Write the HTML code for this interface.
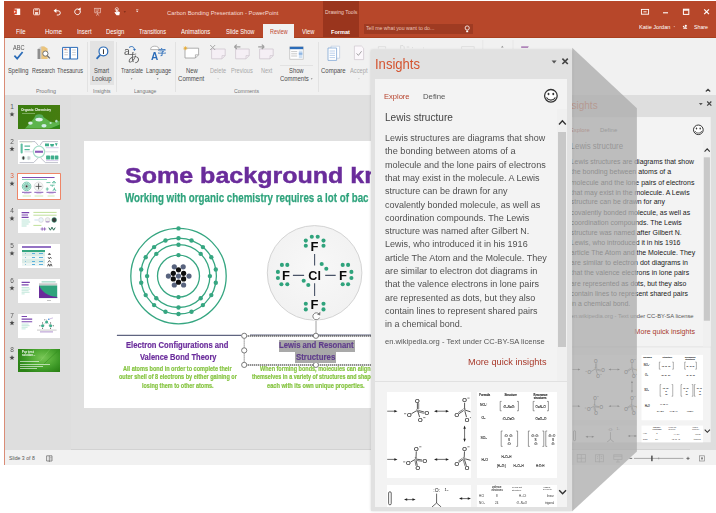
<!DOCTYPE html>
<html><head><meta charset="utf-8"><title>Carbon Bonding Presentation - PowerPoint</title>
<style>
html,body{margin:0;padding:0;}
body{width:716px;height:513px;background:#fff;position:relative;overflow:hidden;font-family:"Liberation Sans",sans-serif;}
.t{position:absolute;white-space:nowrap;line-height:1;}
.r{position:absolute;}
#root{position:absolute;left:0;top:0;width:740px;height:530px;filter:blur(.4px);}
svg{overflow:visible;}
svg text{font-family:"Liberation Sans",sans-serif;}

.pn{position:absolute;width:201px;height:461px;background:#E1E1E1;overflow:hidden;}
.pn .t{color:#505050;}
.pn .c1{position:absolute;left:3.8px;top:28.6px;width:192.4px;height:302.6px;background:#F3F3F3;}
.pn .c2{position:absolute;left:3.8px;top:332px;width:192.4px;height:124.8px;background:#F3F3F3;}
.pn .sb{position:absolute;left:186px;top:59px;width:10.2px;height:272.2px;background:#F0F0F0;}
.pn .th{position:absolute;left:187px;top:81.6px;width:8.4px;height:215.6px;background:#C8C8C8;}
.pn .tile{position:absolute;background:#fff;overflow:hidden;}
.pn .bd{left:13.5px;font-size:9.05px;}
.sm .t{color:#1A1A1A;}
.pn.sm{background:#DEDEDE;}

</style></head><body>
<div id="root">
<div class="r" style="left:4.00px;top:1.00px;width:726.00px;height:36.20px;background:#B7472A;"></div>
<div class="r" style="left:4.00px;top:36.80px;width:726.00px;height:1.10px;background:#A9401F;"></div>
<div class="r" style="left:4.00px;top:37.90px;width:726.00px;height:56.70px;background:#F1F1F1;"></div>
<div class="r" style="left:4.00px;top:94.60px;width:726.00px;height:355.40px;background:#E0E0E0;"></div>
<div class="r" style="left:4.00px;top:94.60px;width:66.80px;height:355.40px;background:#DEDEDE;"></div>
<div class="r" style="left:70.80px;top:449.30px;width:659.20px;height:0.70px;background:#D2D2D2;"></div>
<div class="r" style="left:4.00px;top:450.00px;width:726.00px;height:14.60px;background:#F1F1F1;"></div>
<div class="r" style="left:3.80px;top:38.00px;width:0.90px;height:426.60px;background:#DA8C76;"></div>
<div class="r" style="left:323.00px;top:1.00px;width:36.30px;height:36.00px;background:#9A351D;"></div>
<div class="r" style="left:262.80px;top:24.00px;width:31.40px;height:14.00px;background:#F1F1F1;"></div>
<div class="r" style="left:363.60px;top:23.90px;width:109.90px;height:10.30px;background:#9F3B22;"></div>
<div class="t" style="left:167.00px;top:9.76px;font-size:6.10px;color:#F6DDD6;transform:scaleX(0.955);transform-origin:0 0;">Carbon Bonding Presentation - PowerPoint</div>
<div class="t" style="left:324.80px;top:9.79px;font-size:5.70px;color:#F0CFC5;transform:scaleX(0.910);transform-origin:0 0;">Drawing Tools</div>
<div class="t" style="left:15.50px;top:28.95px;font-size:6.30px;color:#fff;transform:scaleX(0.936);transform-origin:0 0;">File</div>
<div class="t" style="left:45.00px;top:28.95px;font-size:6.30px;color:#fff;transform:scaleX(1.012);transform-origin:0 0;">Home</div>
<div class="t" style="left:76.50px;top:28.95px;font-size:6.30px;color:#fff;transform:scaleX(0.920);transform-origin:0 0;">Insert</div>
<div class="t" style="left:105.90px;top:28.95px;font-size:6.30px;color:#fff;transform:scaleX(0.938);transform-origin:0 0;">Design</div>
<div class="t" style="left:138.90px;top:28.95px;font-size:6.30px;color:#fff;transform:scaleX(0.883);transform-origin:0 0;">Transitions</div>
<div class="t" style="left:181.30px;top:28.95px;font-size:6.30px;color:#fff;transform:scaleX(0.940);transform-origin:0 0;">Animations</div>
<div class="t" style="left:226.00px;top:28.95px;font-size:6.30px;color:#fff;transform:scaleX(0.904);transform-origin:0 0;">Slide Show</div>
<div class="t" style="left:302.20px;top:28.95px;font-size:6.30px;color:#fff;transform:scaleX(0.908);transform-origin:0 0;">View</div>
<div class="t" style="left:269.50px;top:28.95px;font-size:6.30px;color:#C0452A;transform:scaleX(0.857);transform-origin:0 0;">Review</div>
<div class="t" style="left:331.40px;top:29.00px;font-size:6.20px;color:#fff;transform:scaleX(0.899);transform-origin:0 0;font-weight:700;">Format</div>
<div class="t" style="left:366.00px;top:26.09px;font-size:5.70px;color:#E9C4B8;transform:scaleX(0.912);transform-origin:0 0;">Tell me what you want to do...</div>
<div class="t" style="left:639.20px;top:24.54px;font-size:5.80px;color:#fff;transform:scaleX(0.964);transform-origin:0 0;">Katie Jordan</div>
<div class="t" style="left:694.00px;top:24.54px;font-size:5.80px;color:#fff;transform:scaleX(0.905);transform-origin:0 0;">Share</div>
<svg class="r" style="left:0.00px;top:0.00px;" width="716" height="40" viewBox="0 0 716 40"><rect x="14.6" y="8.6" width="5.6" height="6.4" fill="#fff"/><rect x="13.2" y="9.4" width="3.6" height="4.8" fill="#D9482B"/><path d="M14.2 10.6l1.6 1.2-1.6 1.2z" fill="#fff"/><rect x="33.6" y="8.8" width="6" height="6" rx="0.6" fill="none" stroke="#F3D5CC" stroke-width="1"/><rect x="35" y="12" width="3.2" height="2.8" fill="#F3D5CC"/><rect x="34.8" y="9" width="3.4" height="1.6" fill="#F3D5CC" opacity=".7"/><path d="M55.4 10.8h2.8a2.1 2.1 0 0 1 0 4.2h-1.4" fill="none" stroke="#fff" stroke-width=".95"/><path d="M53.6 10.8l2.8-2.3v4.6z" fill="#fff"/><path d="M78.6 9.2a2.8 2.8 0 1 0 1.6 1.8" fill="none" stroke="#fff" stroke-width="1"/><path d="M80.8 7.6l-.2 3.4-3-1.4z" fill="#fff"/><path d="M94 8.4h7.2M94.8 8.4v4.4h5.6V8.4M96.2 10h2.8M96.2 11.4h2M97.6 12.8v1.6M96 15.6l1.6-1.4 1.6 1.4" fill="none" stroke="#F1CFC5" stroke-width=".7"/><circle cx="116.8" cy="9.2" r="1.6" fill="none" stroke="#fff" stroke-width=".6"/><path d="M116.3 9v3.4l-1.2-.6-.6 .8 2 2.6h2.8l.6-3-1.2-.6h-1.4V9z" fill="#fff"/><path d="M123.6 11.2h2.4l-1.2 1.5z" fill="#7A2A16"/><path d="M136 10.8h2.4l-1.2 1.5z" fill="#fff"/><path d="M136 9.6h2.4" stroke="#fff" stroke-width=".5"/><circle cx="467.2" cy="28" r="2.1" fill="none" stroke="#fff" stroke-width=".8"/><path d="M466.2 30.6h2v1.6h-2z" fill="#fff"/><rect x="641.4" y="9.4" width="7.2" height="4.8" fill="none" stroke="#fff" stroke-width=".9"/><path d="M643.4 11.8h3.2" stroke="#fff" stroke-width=".9"/><path d="M663 12.8h5" stroke="#fff" stroke-width="1.1"/><rect x="683.4" y="9.2" width="5.4" height="5.2" fill="none" stroke="#fff" stroke-width="1"/><path d="M683.4 10h5.4" stroke="#fff" stroke-width="1.4"/><path d="M704.2 9.4l4.8 4.8M709 9.4l-4.8 4.8" stroke="#fff" stroke-width="1.2"/><path d="M673.4 26.2h1.8l-.9 1.1z" fill="#E8C0B4"/><circle cx="685.8" cy="25.8" r="1.1" fill="#fff"/><path d="M683.2 28.8c0-2 4-2 4 0z" fill="#fff"/><circle cx="683.6" cy="26.6" r=".8" fill="#fff"/></svg>
<div class="r" style="left:89.70px;top:41.00px;width:24.30px;height:43.60px;background:#E3E3E3;"></div>
<div class="r" style="left:86.60px;top:41.50px;width:0.60px;height:50.50px;background:#E2E2E2;"></div>
<div class="r" style="left:116.40px;top:41.50px;width:0.60px;height:50.50px;background:#E2E2E2;"></div>
<div class="r" style="left:175.00px;top:41.50px;width:0.60px;height:50.50px;background:#E2E2E2;"></div>
<div class="r" style="left:317.50px;top:41.50px;width:0.60px;height:50.50px;background:#E2E2E2;"></div>
<div class="r" style="left:280.30px;top:65.00px;width:32.40px;height:0.60px;background:#E2E2E2;"></div>
<div class="t" style="left:8.40px;top:68.45px;font-size:6.30px;color:#4C4C4C;transform:scaleX(0.910);transform-origin:0 0;">Spelling</div>
<div class="t" style="left:31.80px;top:68.45px;font-size:6.30px;color:#4C4C4C;transform:scaleX(0.853);transform-origin:0 0;">Research</div>
<div class="t" style="left:57.00px;top:68.45px;font-size:6.30px;color:#4C4C4C;transform:scaleX(0.873);transform-origin:0 0;">Thesaurus</div>
<div class="t" style="left:94.20px;top:68.45px;font-size:6.30px;color:#4C4C4C;transform:scaleX(0.905);transform-origin:0 0;">Smart</div>
<div class="t" style="left:92.00px;top:76.25px;font-size:6.30px;color:#4C4C4C;transform:scaleX(0.948);transform-origin:0 0;">Lookup</div>
<div class="t" style="left:120.60px;top:68.45px;font-size:6.30px;color:#4C4C4C;transform:scaleX(0.849);transform-origin:0 0;">Translate</div>
<div class="t" style="left:145.50px;top:68.45px;font-size:6.30px;color:#4C4C4C;transform:scaleX(0.899);transform-origin:0 0;">Language</div>
<div class="t" style="left:185.80px;top:68.45px;font-size:6.30px;color:#4C4C4C;transform:scaleX(0.928);transform-origin:0 0;">New</div>
<div class="t" style="left:178.40px;top:76.25px;font-size:6.30px;color:#4C4C4C;transform:scaleX(0.963);transform-origin:0 0;">Comment</div>
<div class="t" style="left:210.00px;top:68.45px;font-size:6.30px;color:#A8A8A8;transform:scaleX(0.879);transform-origin:0 0;">Delete</div>
<div class="t" style="left:230.90px;top:68.45px;font-size:6.30px;color:#A8A8A8;transform:scaleX(0.889);transform-origin:0 0;">Previous</div>
<div class="t" style="left:260.70px;top:68.45px;font-size:6.30px;color:#A8A8A8;transform:scaleX(0.872);transform-origin:0 0;">Next</div>
<div class="t" style="left:289.20px;top:68.45px;font-size:6.30px;color:#4C4C4C;transform:scaleX(0.926);transform-origin:0 0;">Show</div>
<div class="t" style="left:280.00px;top:76.25px;font-size:6.30px;color:#4C4C4C;transform:scaleX(0.946);transform-origin:0 0;">Comments</div>
<div class="t" style="left:321.30px;top:68.45px;font-size:6.30px;color:#4C4C4C;transform:scaleX(0.953);transform-origin:0 0;">Compare</div>
<div class="t" style="left:350.20px;top:68.45px;font-size:6.30px;color:#A8A8A8;transform:scaleX(0.914);transform-origin:0 0;">Accept</div>
<div class="t" style="left:35.70px;top:87.52px;font-size:6.00px;color:#767676;transform:scaleX(0.890);transform-origin:0 0;">Proofing</div>
<div class="t" style="left:93.00px;top:87.52px;font-size:6.00px;color:#767676;transform:scaleX(0.851);transform-origin:0 0;">Insights</div>
<div class="t" style="left:134.00px;top:87.52px;font-size:6.00px;color:#767676;transform:scaleX(0.839);transform-origin:0 0;">Language</div>
<div class="t" style="left:233.90px;top:87.52px;font-size:6.00px;color:#767676;transform:scaleX(0.862);transform-origin:0 0;">Comments</div>
<svg class="r" style="left:0.00px;top:0.00px;" width="716" height="96" viewBox="0 0 716 96"><text x="18.8" y="50" font-size="6.4" text-anchor="middle" fill="#555" textLength="11.6" lengthAdjust="spacingAndGlyphs">ABC</text><path d="M14.4 55.6l2.8 3 5.4-6.6" fill="none" stroke="#2B6CB8" stroke-width="1.7"/><path d="M37.6 49l3.2-2.6 3.6 0v12.6h-6.8z" fill="#CFCFCF"/><rect x="37.6" y="49" width="2.6" height="10" fill="#8E8E8E"/><path d="M41.4 46.6l3-0.2 3.2 2v10.6h-6.2z" fill="#EBC47C"/><circle cx="45.4" cy="53.6" r="2.6" fill="#fff" stroke="#666" stroke-width=".9"/><path d="M47.2 55.6l2.6 2.8" stroke="#666" stroke-width="1.2"/><path d="M62.6 47.4h7.4v11.6h-7.4zM70.2 47.4h7.4v11.6h-7.4z" fill="#fff" stroke="#2B6CB8" stroke-width="1"/><path d="M64.4 50h3.6M64.4 52.4h3.6M64.4 54.8h3.6M72.2 50h3.6M72.2 52.4h3.6M72.2 54.8h3.6" stroke="#C9C9C9" stroke-width=".9"/><path d="M64.4 49.2h2" stroke="#D9482B" stroke-width=".9"/><circle cx="103.4" cy="51.4" r="4.4" fill="#fff" stroke="#2B6CB8" stroke-width="1.2"/><path d="M100.2 54.8l-3.6 4" stroke="#2B6CB8" stroke-width="1.8"/><text x="103.5" y="53.8" font-size="6.8" font-weight="700" text-anchor="middle" fill="#2A2A2A" font-family="Liberation Serif,serif">i</text><text x="126.8" y="55" font-size="10.5" text-anchor="middle" fill="#555">a</text><text x="134.4" y="60.6" font-size="11.5" text-anchor="middle" fill="#555" font-family="Liberation Sans,Noto Sans CJK JP,sans-serif">あ</text><path d="M129 47.6c2.4-2 5-1 5.4 1.6" fill="none" stroke="#2B6CB8" stroke-width="1"/><path d="M133 49h3l-1.5 2z" fill="#2B6CB8"/><text x="154.6" y="60.2" font-size="10" font-weight="700" text-anchor="middle" fill="#2B6CB8">A</text><text x="162" y="55.2" font-size="7.6" font-weight="700" text-anchor="middle" fill="#2B6CB8" font-family="Liberation Sans,Noto Sans CJK JP,sans-serif">字</text><path d="M150.6 49.6a4.2 3.4 0 0 1 8.4 0z" fill="#fff" stroke="#999" stroke-width=".7"/><path d="M130.7 78.4h1.8l-.9 1.1zM156.8 78.4h1.8l-.9 1.1z" fill="#555"/><path d="M185.0 48.2h13.6v6.6l-3.2 3.2h-10.4z" fill="#fff" stroke="#9A9A9A" stroke-width=".8"/><path d="M195.4 58.0v-3.2h3.2" fill="none" stroke="#9A9A9A" stroke-width=".7"/><path d="M185.4 46.2v4M183.4 48.2h4M184 46.8l2.8 2.8M186.8 46.8l-2.8 2.8" stroke="#E9A825" stroke-width=".7"/><path d="M211.6 49.0h13.6v6.6l-3.2 3.2h-10.4z" fill="#F5EFF5" stroke="#CFC6CF" stroke-width=".8"/><path d="M222.0 58.8v-3.2h3.2" fill="none" stroke="#CFC6CF" stroke-width=".7"/><path d="M210.2 45l5 5M215.2 45l-5 5" stroke="#A6A6A6" stroke-width="1"/><path d="M235.6 49.0h13.6v6.6l-3.2 3.2h-10.4z" fill="#F5EFF5" stroke="#CFC6CF" stroke-width=".8"/><path d="M246.0 58.8v-3.2h3.2" fill="none" stroke="#CFC6CF" stroke-width=".7"/><path d="M234.4 46.8h6M234.4 46.8l2.4-2.2M234.4 46.8l2.4 2.2" stroke="#9F9F9F" stroke-width="1.2" fill="none"/><path d="M259.6 49.0h13.6v6.6l-3.2 3.2h-10.4z" fill="#F5EFF5" stroke="#CFC6CF" stroke-width=".8"/><path d="M270.0 58.8v-3.2h3.2" fill="none" stroke="#CFC6CF" stroke-width=".7"/><path d="M258.2 46.8h6M264.2 46.8l-2.4-2.2M264.2 46.8l-2.4 2.2" stroke="#9F9F9F" stroke-width="1.2" fill="none"/><path d="M217.4 78.4h1.4l-.7 .9z" fill="#AAA"/><rect x="289.8" y="46.8" width="13.4" height="12.4" fill="#fff" stroke="#B9B9B9" stroke-width=".7"/><rect x="289.8" y="46.8" width="13.4" height="2.4" fill="#2B6CB8"/><path d="M291.2 51.6h6M291.2 53.8h6M291.2 56h6" stroke="#BBB" stroke-width=".8"/><rect x="298.8" y="50.6" width="3.6" height="7.6" fill="#CFE0F3"/><rect x="298.8" y="52.6" width="3.6" height="2.2" fill="#8FB6E3"/><path d="M310.8 78.4h1.8l-.9 1.1z" fill="#555"/><path d="M331 46.2h8.6v12h-8.6z" fill="#fff" stroke="#B8C9DE" stroke-width=".7"/><path d="M328 48h8.6v12.4h-8.6z" fill="#fff" stroke="#7FA6D4" stroke-width=".8"/><path d="M329.6 51h5.4M329.6 53.2h5.4M329.6 55.4h5.4M329.6 57.6h5.4" stroke="#A9C4E6" stroke-width=".8"/><path d="M354.4 46h7l2.2 2.2v11.4h-9.2z" fill="#FBF7FB" stroke="#CFC5CF" stroke-width=".7"/><path d="M356.6 53.4l1.8 2 3.2-4.2" fill="none" stroke="#9A9A9A" stroke-width=".9"/><path d="M358.2 78.4h1.4l-.7 .9z" fill="#AAA"/><path d="M705.8 91.5l2.2-2.2 2.2 2.2" fill="none" stroke="#444" stroke-width="1.15"/></svg>
<div class="t" style="left:8.70px;top:455.33px;font-size:5.98px;color:#555;transform:scaleX(0.862);transform-origin:0 0;">Slide 3 of 8</div>
<svg class="r" style="left:0.00px;top:440.00px;" width="716" height="30" viewBox="0 440 716 30"><path d="M46.6 455.8h5.4v5.2h-5.4zM49.3 455.8v6.2" fill="none" stroke="#666" stroke-width=".7"/><path d="M50.2 457.4h1.4M50.2 459h1.4" stroke="#666" stroke-width=".5"/><g fill="none" stroke="#9A9A9A" stroke-width=".75"><rect x="577.2" y="454.6" width="8.2" height="7.4"/><path d="M577.2 458.3h8.2M581.3 454.6v7.4"/><rect x="595.4" y="454.8" width="8" height="7"/><path d="M599.4 454.2v8.2M597 456.6h1M597 458.4h1M600.8 456.6h1.4M600.8 458.4h1.4"/><rect x="613.8" y="454.8" width="8.2" height="4.8"/><path d="M613.8 456.2h8.2M617.9 459.6v2.2M616 462h3.8"/></g><path d="M629.4 458.4h2.8" stroke="#555" stroke-width=".8"/><path d="M634 458.4h49.4" stroke="#777" stroke-width=".6"/><rect x="651.2" y="455.6" width="1.4" height="5.6" fill="#444"/><path d="M658.7 457.4v2" stroke="#777" stroke-width=".5"/><path d="M686.4 458.4h3.2M688 456.8v3.2" stroke="#555" stroke-width=".8"/><rect x="699.4" y="455.8" width="5.2" height="5.2" fill="none" stroke="#8A8A8A" stroke-width=".7"/><rect x="701" y="457.4" width="2" height="2" fill="#8A8A8A"/></svg>
<div class="t" style="left:10.30px;top:104.05px;font-size:6.47px;color:#5A5A5A;">1</div>
<svg class="r" style="left:0.00px;top:0.00px;" width="716" height="513" viewBox="0 0 716 513"><polygon points="12.00,111.70 12.68,113.47 14.57,113.57 13.09,114.76 13.59,116.58 12.00,115.55 10.41,116.58 10.91,114.76 9.43,113.57 11.32,113.47" fill="#4A4A4A"/></svg>
<div class="t" style="left:10.30px;top:138.65px;font-size:6.47px;color:#5A5A5A;">2</div>
<svg class="r" style="left:0.00px;top:0.00px;" width="716" height="513" viewBox="0 0 716 513"><polygon points="12.00,146.30 12.68,148.07 14.57,148.17 13.09,149.36 13.59,151.18 12.00,150.15 10.41,151.18 10.91,149.36 9.43,148.17 11.32,148.07" fill="#4A4A4A"/></svg>
<div class="t" style="left:10.30px;top:173.35px;font-size:6.47px;color:#E0613F;">3</div>
<svg class="r" style="left:0.00px;top:0.00px;" width="716" height="513" viewBox="0 0 716 513"><polygon points="12.00,181.00 12.68,182.77 14.57,182.87 13.09,184.06 13.59,185.88 12.00,184.85 10.41,185.88 10.91,184.06 9.43,182.87 11.32,182.77" fill="#4A4A4A"/></svg>
<div class="t" style="left:10.30px;top:208.15px;font-size:6.47px;color:#5A5A5A;">4</div>
<svg class="r" style="left:0.00px;top:0.00px;" width="716" height="513" viewBox="0 0 716 513"><polygon points="12.00,215.80 12.68,217.57 14.57,217.67 13.09,218.86 13.59,220.68 12.00,219.65 10.41,220.68 10.91,218.86 9.43,217.67 11.32,217.57" fill="#4A4A4A"/></svg>
<div class="t" style="left:10.30px;top:243.05px;font-size:6.47px;color:#5A5A5A;">5</div>
<svg class="r" style="left:0.00px;top:0.00px;" width="716" height="513" viewBox="0 0 716 513"><polygon points="12.00,250.70 12.68,252.47 14.57,252.57 13.09,253.76 13.59,255.58 12.00,254.55 10.41,255.58 10.91,253.76 9.43,252.57 11.32,252.47" fill="#4A4A4A"/></svg>
<div class="t" style="left:10.30px;top:277.85px;font-size:6.47px;color:#5A5A5A;">6</div>
<svg class="r" style="left:0.00px;top:0.00px;" width="716" height="513" viewBox="0 0 716 513"><polygon points="12.00,285.50 12.68,287.27 14.57,287.37 13.09,288.56 13.59,290.38 12.00,289.35 10.41,290.38 10.91,288.56 9.43,287.37 11.32,287.27" fill="#4A4A4A"/></svg>
<div class="t" style="left:10.30px;top:312.65px;font-size:6.47px;color:#5A5A5A;">7</div>
<svg class="r" style="left:0.00px;top:0.00px;" width="716" height="513" viewBox="0 0 716 513"><polygon points="12.00,320.30 12.68,322.07 14.57,322.17 13.09,323.36 13.59,325.18 12.00,324.15 10.41,325.18 10.91,323.36 9.43,322.17 11.32,322.07" fill="#4A4A4A"/></svg>
<div class="t" style="left:10.30px;top:347.45px;font-size:6.47px;color:#5A5A5A;">8</div>
<svg class="r" style="left:0.00px;top:0.00px;" width="716" height="513" viewBox="0 0 716 513"><polygon points="12.00,355.10 12.68,356.87 14.57,356.97 13.09,358.16 13.59,359.98 12.00,358.95 10.41,359.98 10.91,358.16 9.43,356.97 11.32,356.87" fill="#4A4A4A"/></svg>
<div class="r" style="left:18.05px;top:104.90px;width:41.65px;height:24.00px;background:linear-gradient(95deg,#3C7D10 0%,#3F7E10 55%,#477C10 100%);overflow:hidden"></div>
<svg class="r" style="left:0.00px;top:0.00px;" width="716" height="513" viewBox="0 0 716 513"><defs><clipPath id="c1"><rect x="18.05" y="104.9" width="41.65" height="23.7"/></clipPath><filter id="b1"><feGaussianBlur stdDeviation=".45"/></filter></defs><g clip-path="url(#c1)"><g filter="url(#b1)"><path d="M24.5 129L30 123 35 117 39 114.4 44 117.4 50 121.4 55 122.6 60 120.4V125L50 129z" fill="#5DB44E"/><path d="M49 129L60 124.6V129z" fill="#2C8A1C"/><ellipse cx="39.1" cy="117.2" rx="4.3" ry="3" fill="#58AD5C"/><ellipse cx="39.1" cy="119.6" rx="3.7" ry="1.9" fill="#E4F3F3"/><ellipse cx="30.4" cy="123.1" rx="2.3" ry="1.6" fill="#D7EEE6"/><ellipse cx="44" cy="125.8" rx="2.6" ry="1.8" fill="#CFEBE6"/><ellipse cx="56.4" cy="121.2" rx="1.2" ry="1.4" fill="#A8DCC0"/><ellipse cx="50.6" cy="123" rx="1.1" ry=".9" fill="#BFE6D2"/></g></g></svg>
<div class="t" style="left:21.30px;top:108.70px;font-size:3.80px;color:#fff;transform:scaleX(0.885);transform-origin:0 0;font-weight:700;">Organic Chemistry</div>
<div class="r" style="left:21.50px;top:112.50px;width:13.50px;height:0.40px;background:rgba(220,240,210,.4);"></div>
<div class="r" style="left:18.05px;top:139.50px;width:41.65px;height:24.00px;background:#fff;"></div>
<svg class="r" style="left:0.00px;top:0.00px;" width="716" height="513" viewBox="0 0 716 513"><g fill="none" stroke="#8B90A2" stroke-width=".55"><path d="M19.6 141.6H35L38.4 145.6M58 141.6H42.6L39.8 145.6M19.6 162.6H33.6L38.4 157.8M58 162.6H45.4L40.5 157.8"/></g><path d="M24.5 151.8H33M45.4 151.8H58" stroke="#BFC3D0" stroke-width=".6"/><path d="M19.6 142.2H32.2" stroke="#CFE6A8" stroke-width=".4"/><circle cx="39" cy="151.8" r="5.6" fill="#fff" stroke="#A5DEC9" stroke-width="1.3"/><rect x="35" y="150.7" width="8" height="2.1" fill="#8A5CB8"/><rect x="20.6" y="143.4" width="2.1" height="10.2" rx="1" fill="#5FBFA2"/><path d="M24.5 146.2h5.6M24.5 149.7h5.2" stroke="#52B898" stroke-width="1.3"/><g fill="#3FAE8C"><path d="M45 143.6h4v2.6h-4zM50 144h4.2l-.8 2.4h-2.6zM54.9 143.2h2.8l-1.4 3z"/><rect x="46.1" y="155.6" width="3.9" height="3.8" rx=".5"/><rect x="50.6" y="155.6" width="3.7" height="3.8" rx=".5"/><rect x="54.9" y="155.6" width="3.5" height="3.8" rx=".5"/></g><path d="M45.8 147.7H58.6M46 160.6H58.4" stroke="#B59AD6" stroke-width=".5"/><circle cx="23.4" cy="158" r="2.3" fill="#DFF3EC"/><circle cx="28.7" cy="158" r="2.3" fill="#DFF3EC"/><ellipse cx="23.4" cy="158" rx="1.1" ry="1.7" fill="#3A3A3A"/><ellipse cx="28.7" cy="158" rx="1.2" ry="1.7" fill="#C9C9CF"/></svg>
<div class="r" style="left:16.80px;top:172.90px;width:44.10px;height:26.80px;background:#fff;border:1.4px solid #EE8567;box-sizing:border-box;border-radius:.8px"></div>
<div class="r" style="left:22.00px;top:176.50px;width:31.60px;height:1.60px;background:#7F4BB2;"></div>
<div class="r" style="left:53.60px;top:177.00px;width:1.80px;height:0.60px;background:#B79AD8;"></div>
<div class="r" style="left:22.00px;top:179.00px;width:24.80px;height:0.60px;background:#8FD2BA;"></div>
<svg class="r" style="left:0.00px;top:0.00px;" width="716" height="513" viewBox="0 0 716 513"><g fill="none" stroke="#45B391" stroke-width=".7"><circle cx="26.6" cy="186.4" r="4.3"/><circle cx="26.6" cy="186.4" r="3.1"/><circle cx="26.6" cy="186.4" r="2"/></g><circle cx="26.6" cy="186.4" r="1.1" fill="#333"/><circle cx="38.6" cy="186.4" r="4.4" fill="#F6F6F6" stroke="#C8C8C8" stroke-width=".5"/><path d="M35.6 186.4h6M38.6 183.4v6" stroke="#444" stroke-width=".8"/><path d="M46.4 182.6h4M52.4 182.8l1.6-1.8 1.6 1.8zM50 185.2h4.6M52.3 185.2v1.6M47.2 187.4v3.4M45.8 189h3M54.4 187.6v2.6M54.4 188.6l-1.6 2.4M54.4 188.6l1.6 2.4" stroke="#45B391" stroke-width=".75" fill="none"/><path d="M22 192.3h9.5M34.3 192.3h9M46.5 192.3h9.4" stroke="#8A5CB8" stroke-width="1"/><path d="M24 193.6h5.6M36.4 193.6h5M48.6 193.6h5" stroke="#B59AD6" stroke-width=".5"/><path d="M22.6 196h8.4M34.6 196h8.6M47.6 196h7" stroke="#C2E39C" stroke-width=".8"/></svg>
<div class="r" style="left:18.05px;top:209.00px;width:41.65px;height:24.00px;background:#fff;"></div>
<svg class="r" style="left:0.00px;top:0.00px;" width="716" height="513" viewBox="0 0 716 513"><path d="M21.6 212.6h7.6M21.6 215.0h6.4M21.6 217.4h7" stroke="#7A45AE" stroke-width="1.1"/><path d="M21.6 220.0h7.6M21.6 222.0h8.6M21.6 224.0h7M21.6 226.0h5" stroke="#9CD8C4" stroke-width=".7"/><path d="M33.4 212.4h23.2M33.4 215.2h23.2M33.4 225.4h8" stroke="#A5D36E" stroke-width=".7"/><circle cx="41" cy="220.0" r="2.4" fill="#EAF4FA" stroke="#BBB" stroke-width=".4"/><circle cx="47.6" cy="220.0" r="2.4" fill="#EEE" stroke="#BBB" stroke-width=".4"/><circle cx="54.2" cy="220.0" r="2.4" fill="#3A3A3A" stroke="#2FA37C" stroke-width=".5"/><path d="M34.4 220.0h3.6" stroke="#AACBE0" stroke-width=".6"/><path d="M45.8 221.8h3.6" stroke="#8E63B8" stroke-width=".7"/><path d="M40.6 229.0h5.6M42.2 227.3v3.4M44.6 227.3v3.4" stroke="#7A45AE" stroke-width=".7"/><path d="M48.8 227.6l1.6 2.6 1.6-3 1.6 3 1.6-2.6" fill="none" stroke="#2B6B54" stroke-width="1"/></svg>
<div class="r" style="left:18.05px;top:243.90px;width:41.65px;height:24.00px;background:#fff;"></div>
<div class="r" style="left:21.80px;top:246.20px;width:29.00px;height:1.90px;background:#9472C4;"></div>
<div class="r" style="left:21.60px;top:249.70px;width:23.40px;height:2.20px;background:#34A680;"></div>
<div class="r" style="left:21.60px;top:251.90px;width:23.40px;height:3.65px;background:#DBECE7;"></div>
<div class="r" style="left:31.80px;top:253.30px;width:3.00px;height:0.80px;background:#5AB0DC;"></div>
<div class="r" style="left:39.00px;top:253.30px;width:3.80px;height:0.80px;background:#5AB0DC;"></div>
<div class="r" style="left:25.20px;top:253.30px;width:0.80px;height:0.80px;background:#8CC4DC;"></div>
<div class="r" style="left:21.60px;top:255.55px;width:23.40px;height:3.65px;background:#EDF5F3;"></div>
<div class="r" style="left:31.80px;top:256.95px;width:3.00px;height:0.80px;background:#5AB0DC;"></div>
<div class="r" style="left:39.00px;top:256.95px;width:3.80px;height:0.80px;background:#5AB0DC;"></div>
<div class="r" style="left:25.20px;top:256.95px;width:0.80px;height:0.80px;background:#8CC4DC;"></div>
<div class="r" style="left:21.60px;top:259.20px;width:23.40px;height:3.65px;background:#DBECE7;"></div>
<div class="r" style="left:31.80px;top:260.60px;width:3.00px;height:0.80px;background:#5AB0DC;"></div>
<div class="r" style="left:39.00px;top:260.60px;width:3.80px;height:0.80px;background:#5AB0DC;"></div>
<div class="r" style="left:25.20px;top:260.60px;width:0.80px;height:0.80px;background:#8CC4DC;"></div>
<div class="r" style="left:21.60px;top:262.85px;width:23.40px;height:3.65px;background:#EDF5F3;"></div>
<div class="r" style="left:31.80px;top:264.25px;width:3.00px;height:0.80px;background:#5AB0DC;"></div>
<div class="r" style="left:39.00px;top:264.25px;width:3.80px;height:0.80px;background:#5AB0DC;"></div>
<div class="r" style="left:25.20px;top:264.25px;width:0.80px;height:0.80px;background:#8CC4DC;"></div>
<svg class="r" style="left:0.00px;top:0.00px;" width="716" height="513" viewBox="0 0 716 513"><path d="M48.4 254.5l1-1.4 1 1.4zM48 257.1l1.2 1.8 1.2-1.8 1 1.6M47.8 262.5l1.6-2 1.6 2M47.6 266.3l1-2.4 1.2 2.4 1.2-2.4 1 2.4" fill="none" stroke="#222" stroke-width=".7"/></svg>
<div class="r" style="left:18.05px;top:278.70px;width:41.65px;height:24.00px;background:#fff;"></div>
<svg class="r" style="left:0.00px;top:0.00px;" width="716" height="513" viewBox="0 0 716 513"><path d="M21.6 282.3h8.2M21.6 284.9h7" stroke="#7A45AE" stroke-width="1.2"/><path d="M21.6 287.5h7.6M21.6 289.1h8.6M21.6 290.7h7M21.6 292.3h8M21.6 293.9h3" stroke="#9CD8C4" stroke-width=".6"/><path d="M41.6 281.9h14" stroke="#7CC9B0" stroke-width=".9"/><rect x="39" y="283.3" width="18.2" height="2.2" fill="#C9C9C9"/><rect x="39" y="285.5" width="18.2" height="12.6" fill="#2FA37C"/><path d="M39 285.5c3 6 8 10.6 18.2 11.6v1h-18.2z" fill="#6A2C9B"/><path d="M47 300.5h4" stroke="#888" stroke-width=".5"/></svg>
<div class="r" style="left:18.05px;top:313.50px;width:41.65px;height:24.00px;background:#fff;"></div>
<svg class="r" style="left:0.00px;top:0.00px;" width="716" height="513" viewBox="0 0 716 513"><path d="M21.6 316.5h5.4M21.6 319.1h10.6M21.6 321.7h10.6" stroke="#7A45AE" stroke-width="1.1"/><path d="M21.6 324.1h7M21.6 325.7h8M21.6 327.3h6M21.6 328.9h4" stroke="#9CD8C4" stroke-width=".6"/><g stroke="#999" stroke-width=".4"><path d="M42.6 325.5l4-3.6 4 3.6M40.4 325.7h4.4M48.4 325.7h4.4M42.6 323.5v4.4M50.6 323.5v4.4M46.6 321.9v-2.6" fill="none"/></g><circle cx="42.6" cy="325.7" r="1.5" fill="#3FAE8C"/><circle cx="50.6" cy="325.7" r="1.5" fill="#3FAE8C"/><circle cx="46.6" cy="322.1" r="1.5" fill="#3FAE8C"/><circle cx="48.8" cy="319.3" r=".8" fill="#3B8AD8"/><g fill="#555"><circle cx="42.6" cy="322.9" r=".55"/><circle cx="42.6" cy="328.5" r=".55"/><circle cx="39.8" cy="325.7" r=".55"/><circle cx="50.6" cy="322.9" r=".55"/><circle cx="50.6" cy="328.5" r=".55"/><circle cx="53.4" cy="325.7" r=".55"/><circle cx="44.8" cy="319.7" r=".55"/></g><path d="M49.6 318.9l3.4-1" stroke="#8E63B8" stroke-width=".4"/><path d="M37 330.1h19.6" stroke="#777" stroke-width=".4"/><path d="M40 331.9h13" stroke="#8E63B8" stroke-width=".7"/></svg>
<div class="r" style="left:18.05px;top:348.70px;width:41.65px;height:23.30px;background:radial-gradient(ellipse 60% 75% at 58% 38%,#78C656 0%,#55AE38 40%,#3C9826 70%,#2B8216 100%);"></div>
<svg class="r" style="left:0.00px;top:0.00px;" width="716" height="513" viewBox="0 0 716 513"><path d="M44 363.9L57.4 351.3" stroke="#2F8A1C" stroke-width=".7" opacity=".7"/><path d="M40 361.3L50 349.3" stroke="#9ADB7C" stroke-width=".6" opacity=".5"/></svg>
<div class="t" style="left:22.40px;top:350.60px;font-size:3.80px;color:#fff;transform:scaleX(0.854);transform-origin:0 0;font-weight:700;">For test</div>
<div class="t" style="left:22.40px;top:353.70px;font-size:3.80px;color:#fff;transform:scaleX(0.736);transform-origin:0 0;font-weight:700;">solution...</div>
<div class="r" style="left:20.40px;top:361.40px;width:18.80px;height:0.80px;background:rgba(255,255,255,.6);"></div>
<div class="r" style="left:20.40px;top:364.20px;width:29.20px;height:0.80px;background:rgba(255,255,255,.6);"></div>
<div class="r" style="left:20.40px;top:366.30px;width:22.60px;height:0.80px;background:rgba(255,255,255,.6);"></div>
<div class="r" style="left:20.40px;top:368.20px;width:16.30px;height:0.80px;background:rgba(255,255,255,.6);"></div>
<div class="r" style="left:83.50px;top:141.30px;width:646.50px;height:266.70px;background:#fff;"></div>
<div class="t" style="left:125.40px;top:165.30px;font-size:21.20px;color:#6A2C9B;transform:scaleX(1.181);transform-origin:0 0;-webkit-text-stroke:.45px #6A2C9B;font-weight:700;">Some background kn</div>
<div class="t" style="left:125.20px;top:190.90px;font-size:13.10px;color:#2FA37C;transform:scaleX(0.746);transform-origin:0 0;-webkit-text-stroke:.25px #2FA37C;font-weight:700;">Working with organic chemistry requires a lot of bac</div>
<svg class="r" style="left:0.00px;top:0.00px;" width="716" height="513" viewBox="0 0 716 513"><circle cx="178.5" cy="276.1" r="47.7" fill="none" stroke="#36A681" stroke-width="1.3"/><circle cx="178.5" cy="276.1" r="37.9" fill="none" stroke="#36A681" stroke-width="1.3"/><circle cx="178.5" cy="276.1" r="31.4" fill="none" stroke="#36A681" stroke-width="1.3"/><circle cx="178.5" cy="276.1" r="21.0" fill="none" stroke="#36A681" stroke-width="1.3"/><circle cx="178.5" cy="228.4" r="2.2" fill="#36A681"/><circle cx="178.5" cy="238.2" r="2.2" fill="#36A681"/><circle cx="191.5" cy="240.5" r="2.2" fill="#36A681"/><circle cx="202.9" cy="247.1" r="2.2" fill="#36A681"/><circle cx="211.3" cy="257.2" r="2.2" fill="#36A681"/><circle cx="215.8" cy="269.5" r="2.2" fill="#36A681"/><circle cx="215.8" cy="282.7" r="2.2" fill="#36A681"/><circle cx="211.3" cy="295.1" r="2.2" fill="#36A681"/><circle cx="202.9" cy="305.1" r="2.2" fill="#36A681"/><circle cx="191.5" cy="311.7" r="2.2" fill="#36A681"/><circle cx="178.5" cy="314.0" r="2.2" fill="#36A681"/><circle cx="165.5" cy="311.7" r="2.2" fill="#36A681"/><circle cx="154.1" cy="305.1" r="2.2" fill="#36A681"/><circle cx="145.7" cy="295.1" r="2.2" fill="#36A681"/><circle cx="141.2" cy="282.7" r="2.2" fill="#36A681"/><circle cx="141.2" cy="269.5" r="2.2" fill="#36A681"/><circle cx="145.7" cy="257.2" r="2.2" fill="#36A681"/><circle cx="154.1" cy="247.1" r="2.2" fill="#36A681"/><circle cx="165.5" cy="240.5" r="2.2" fill="#36A681"/><circle cx="178.5" cy="244.7" r="2.2" fill="#36A681"/><circle cx="200.7" cy="253.9" r="2.2" fill="#36A681"/><circle cx="209.9" cy="276.1" r="2.2" fill="#36A681"/><circle cx="200.7" cy="298.3" r="2.2" fill="#36A681"/><circle cx="178.5" cy="307.5" r="2.2" fill="#36A681"/><circle cx="156.3" cy="298.3" r="2.2" fill="#36A681"/><circle cx="147.1" cy="276.1" r="2.2" fill="#36A681"/><circle cx="156.3" cy="253.9" r="2.2" fill="#36A681"/><circle cx="178.5" cy="255.1" r="2.2" fill="#36A681"/><circle cx="178.5" cy="297.1" r="2.2" fill="#36A681"/><circle cx="174.3" cy="266.8" r="2.6" fill="#58637E"/><circle cx="183.2" cy="266.8" r="2.6" fill="#58637E"/><circle cx="168.4" cy="276.1" r="2.6" fill="#58637E"/><circle cx="189.0" cy="276.1" r="2.6" fill="#58637E"/><circle cx="174.3" cy="285.0" r="2.6" fill="#58637E"/><circle cx="183.6" cy="285.0" r="2.6" fill="#58637E"/><circle cx="178.5" cy="269.8" r="2.6" fill="#0E0E0E"/><circle cx="173.3" cy="273.3" r="2.6" fill="#0E0E0E"/><circle cx="183.6" cy="273.3" r="2.6" fill="#0E0E0E"/><circle cx="173.3" cy="278.9" r="2.6" fill="#0E0E0E"/><circle cx="183.6" cy="278.9" r="2.6" fill="#0E0E0E"/><circle cx="178.5" cy="282.2" r="2.6" fill="#0E0E0E"/><circle cx="178.5" cy="276.1" r="2.6" fill="#58637E"/><defs><radialGradient id="lg" cx="50%" cy="45%" r="60%"><stop offset="0" stop-color="#F8F8F8"/><stop offset="1" stop-color="#F1F1F1"/></radialGradient></defs><circle cx="314.6" cy="272.9" r="47.3" fill="url(#lg)" stroke="#CFCFCF" stroke-width=".9"/><path d="M314.6 253.9V265.6M314.6 283.2V296M292.9 275.4H304.1M325.2 275.4H335.7" stroke="#4A5468" stroke-width="1.1"/><text x="314.6" y="250.9" font-size="13.0" font-weight="700" text-anchor="middle" fill="#0A0A0A">F</text><text x="314.6" y="308.9" font-size="13.0" font-weight="700" text-anchor="middle" fill="#0A0A0A">F</text><text x="285.9" y="280.0" font-size="13.0" font-weight="700" text-anchor="middle" fill="#0A0A0A">F</text><text x="342.9" y="280.0" font-size="13.0" font-weight="700" text-anchor="middle" fill="#0A0A0A">F</text><text x="314.6" y="280.0" font-size="12.6" font-weight="700" text-anchor="middle" fill="#0A0A0A">Cl</text><circle cx="311.8" cy="236.8" r="2.05" fill="#2FA37C"/><circle cx="317.7" cy="236.8" r="2.05" fill="#2FA37C"/><circle cx="305.8" cy="240.6" r="2.05" fill="#2FA37C"/><circle cx="305.8" cy="245.7" r="2.05" fill="#2FA37C"/><circle cx="323.5" cy="240.6" r="2.05" fill="#2FA37C"/><circle cx="323.5" cy="245.7" r="2.05" fill="#2FA37C"/><circle cx="281.9" cy="264.9" r="2.05" fill="#2FA37C"/><circle cx="287.3" cy="264.9" r="2.05" fill="#2FA37C"/><circle cx="277.9" cy="271.9" r="2.05" fill="#2FA37C"/><circle cx="277.9" cy="278.0" r="2.05" fill="#2FA37C"/><circle cx="281.4" cy="284.3" r="2.05" fill="#2FA37C"/><circle cx="287.3" cy="284.3" r="2.05" fill="#2FA37C"/><circle cx="342.7" cy="264.9" r="2.05" fill="#2FA37C"/><circle cx="348.1" cy="264.9" r="2.05" fill="#2FA37C"/><circle cx="351.4" cy="271.9" r="2.05" fill="#2FA37C"/><circle cx="351.4" cy="278.0" r="2.05" fill="#2FA37C"/><circle cx="342.7" cy="284.3" r="2.05" fill="#2FA37C"/><circle cx="348.1" cy="284.3" r="2.05" fill="#2FA37C"/><circle cx="305.8" cy="303.7" r="2.05" fill="#2FA37C"/><circle cx="305.8" cy="309.4" r="2.05" fill="#2FA37C"/><circle cx="323.5" cy="303.7" r="2.05" fill="#2FA37C"/><circle cx="323.5" cy="309.4" r="2.05" fill="#2FA37C"/><circle cx="321.7" cy="264.0" r="2.05" fill="#2FA37C"/><circle cx="326.3" cy="268.7" r="2.05" fill="#2FA37C"/><circle cx="303.7" cy="280.8" r="2.05" fill="#2FA37C"/><circle cx="308.3" cy="285.0" r="2.05" fill="#2FA37C"/><path d="M316 321v14.4" stroke="#8A8A8A" stroke-width=".8"/><circle cx="316.3" cy="316.4" r="4.4" fill="rgba(255,255,255,.85)"/><path d="M319.6 317.6a3.5 3.5 0 1 1-.6-3.6" fill="none" stroke="#7A7A7A" stroke-width="1"/><path d="M320.4 311.8l-.2 3.6-3.2-1z" fill="#7A7A7A"/><path d="M116.9 335.3h124.4" stroke="#5F6480" stroke-width="1.2"/><path d="M250 335h140" stroke="#5F6480" stroke-width="1"/><path d="M244.2 335.9h150M244.2 364.9h150" fill="none" stroke="#444" stroke-width="1.5" stroke-dasharray="1.1 .9"/><path d="M244.2 335.4v29" stroke="#555" stroke-width=".9" stroke-dasharray="1.1 .9"/><circle cx="244.2" cy="335.8" r="2.6" fill="#fff" stroke="#666" stroke-width=".85"/><circle cx="244.2" cy="350.4" r="2.6" fill="#fff" stroke="#666" stroke-width=".85"/><circle cx="244.2" cy="364.9" r="2.6" fill="#fff" stroke="#666" stroke-width=".85"/><circle cx="315.9" cy="335.8" r="2.6" fill="#fff" stroke="#666" stroke-width=".85"/><circle cx="315.9" cy="364.9" r="2.6" fill="#fff" stroke="#666" stroke-width=".85"/></svg>
<div class="t" style="left:126.10px;top:339.86px;font-size:9.90px;color:#6A2C9B;transform:scaleX(0.771);transform-origin:0 0;-webkit-text-stroke:.2px #6A2C9B;font-weight:700;">Electron Configurations and</div>
<div class="t" style="left:139.50px;top:351.66px;font-size:9.90px;color:#6A2C9B;transform:scaleX(0.762);transform-origin:0 0;-webkit-text-stroke:.2px #6A2C9B;font-weight:700;">Valence Bond Theory</div>
<div class="r" style="left:278.60px;top:340.00px;width:76.20px;height:11.60px;background:#A9A9A9;"></div>
<div class="r" style="left:295.20px;top:351.60px;width:40.80px;height:11.40px;background:#A9A9A9;"></div>
<div class="t" style="left:279.40px;top:339.86px;font-size:9.90px;color:#5F3C8C;transform:scaleX(0.781);transform-origin:0 0;-webkit-text-stroke:.2px #5F3C8C;font-weight:700;">Lewis and Resonant</div>
<div class="t" style="left:296.00px;top:351.66px;font-size:9.90px;color:#5F3C8C;transform:scaleX(0.796);transform-origin:0 0;-webkit-text-stroke:.2px #5F3C8C;font-weight:700;">Structures</div>
<div class="t" style="left:123.20px;top:365.53px;font-size:6.50px;color:#85C441;transform:scaleX(0.854);transform-origin:0 0;-webkit-text-stroke:.18px #85C441;font-weight:700;">All atoms bond in order to complete their</div>
<div class="t" style="left:118.50px;top:374.33px;font-size:6.50px;color:#85C441;transform:scaleX(0.847);transform-origin:0 0;-webkit-text-stroke:.18px #85C441;font-weight:700;">outer shell of 8 electrons by either gaining or</div>
<div class="t" style="left:141.60px;top:383.13px;font-size:6.50px;color:#85C441;transform:scaleX(0.840);transform-origin:0 0;-webkit-text-stroke:.18px #85C441;font-weight:700;">losing them to other atoms.</div>
<div class="t" style="left:260.10px;top:365.53px;font-size:6.50px;color:#85C441;transform:scaleX(0.848);transform-origin:0 0;-webkit-text-stroke:.18px #85C441;font-weight:700;">When forming bonds, molecules can align</div>
<div class="t" style="left:251.80px;top:374.33px;font-size:6.50px;color:#85C441;transform:scaleX(0.829);transform-origin:0 0;-webkit-text-stroke:.18px #85C441;font-weight:700;">themselves in a variety of structures and shape</div>
<div class="t" style="left:267.30px;top:383.13px;font-size:6.50px;color:#85C441;transform:scaleX(0.869);transform-origin:0 0;-webkit-text-stroke:.18px #85C441;font-weight:700;">each with its own unique properties.</div>
<svg class="r" style="left:0.00px;top:0.00px;" width="716" height="60" viewBox="0 0 716 60"><g opacity=".55"><path d="M378.4 48.4v-1.8h7.2v1.8" fill="none" stroke="#C4C4C4" stroke-width=".7"/><path d="M400.6 48.6v-3h2.4l1.2 1.2v1.8M406.6 47h2.6M412 47.6h1" fill="none" stroke="#BDBDBD" stroke-width=".7"/><path d="M423 47.8h.8" stroke="#BBB" stroke-width=".7"/><path d="M461.6 48.6v-2h12.6v2" fill="none" stroke="#C8C8C8" stroke-width=".8"/><path d="M501 47.6l1.3-1.8 1.3 1.8z" fill="#444"/><path d="M521.2 46.2h7.6l-1 1.8h-6.6z" fill="#7A2C8C"/><path d="M482.8 40v9M513 40v9" stroke="#D4D4D4" stroke-width=".6"/></g></svg>
<div class="r" style="left:690.00px;top:95.00px;width:40.00px;height:355.00px;background:#DEDEDE;"></div>
<div class="pn sm" style="left:560.2px;top:95px;transform:scale(.769,.760);transform-origin:0 0;"><div class="c1"></div><div class="c2"></div><div class="sb"></div><div class="th"></div><div class="t" style="left:4.00px;top:8.14px;font-size:13.90px;transform:scaleX(0.939);transform-origin:0 0;color:#D4532F;">Insights</div><div class="t" style="left:13.20px;top:42.79px;font-size:7.60px;transform:scaleX(0.993);transform-origin:0 0;color:#B5402A;">Explore</div><div class="t" style="left:51.60px;top:42.79px;font-size:7.60px;transform:scaleX(1.020);transform-origin:0 0;color:#555;">Define</div><div class="t" style="left:13.70px;top:61.58px;font-size:10.90px;transform:scaleX(0.928);transform-origin:0 0;color:#444;">Lewis structure</div><div class="t" style="left:13.5px;top:83.03px;font-size:9.60px;transform:scaleX(0.933);transform-origin:0 0;">Lewis structures are diagrams that show</div><div class="t" style="left:13.5px;top:96.33px;font-size:9.60px;transform:scaleX(0.956);transform-origin:0 0;">the bonding between atoms of a</div><div class="t" style="left:13.5px;top:109.63px;font-size:9.60px;transform:scaleX(0.948);transform-origin:0 0;">molecule and the lone pairs of electrons</div><div class="t" style="left:13.5px;top:122.93px;font-size:9.60px;transform:scaleX(0.941);transform-origin:0 0;">that may exist in the molecule. A Lewis</div><div class="t" style="left:13.5px;top:136.23px;font-size:9.60px;transform:scaleX(0.945);transform-origin:0 0;">structure can be drawn for any</div><div class="t" style="left:13.5px;top:149.53px;font-size:9.60px;transform:scaleX(0.936);transform-origin:0 0;">covalently bonded molecule, as well as</div><div class="t" style="left:13.5px;top:162.83px;font-size:9.60px;transform:scaleX(0.941);transform-origin:0 0;">coordination compounds. The Lewis</div><div class="t" style="left:13.5px;top:176.13px;font-size:9.60px;transform:scaleX(0.936);transform-origin:0 0;">structure was named after Gilbert N.</div><div class="t" style="left:13.5px;top:189.43px;font-size:9.60px;transform:scaleX(0.942);transform-origin:0 0;">Lewis, who introduced it in his 1916</div><div class="t" style="left:13.5px;top:202.73px;font-size:9.60px;transform:scaleX(0.944);transform-origin:0 0;">article The Atom and the Molecule. They</div><div class="t" style="left:13.5px;top:216.03px;font-size:9.60px;transform:scaleX(0.953);transform-origin:0 0;">are similar to electron dot diagrams in</div><div class="t" style="left:13.5px;top:229.33px;font-size:9.60px;transform:scaleX(0.940);transform-origin:0 0;">that the valence electrons in lone pairs</div><div class="t" style="left:13.5px;top:242.63px;font-size:9.60px;transform:scaleX(0.933);transform-origin:0 0;">are represented as dots, but they also</div><div class="t" style="left:13.5px;top:255.93px;font-size:9.60px;transform:scaleX(0.937);transform-origin:0 0;">contain lines to represent shared pairs</div><div class="t" style="left:13.5px;top:269.23px;font-size:9.60px;transform:scaleX(0.935);transform-origin:0 0;">in a chemical bond.</div><div class="t" style="left:13.50px;top:287.53px;font-size:7.70px;transform:scaleX(0.986);transform-origin:0 0;color:#555;">en.wikipedia.org - Text under CC-BY-SA license</div><div class="t" style="left:97.30px;top:306.85px;font-size:9.40px;transform:scaleX(0.978);transform-origin:0 0;color:#A8392A;">More quick insights</div><svg class="r" style="left:0;top:0" width="201" height="461" viewBox="0 0 201 461"><path d="M180.6 10.6h5l-2.5 2.8z" fill="#555"/><path d="M191.4 8.6l5.4 5.4M196.8 8.6l-5.4 5.4" stroke="#444" stroke-width="1.6"/><circle cx="179.9" cy="45.8" r="6.3" fill="#fff" stroke="#333" stroke-width="1.3"/><ellipse cx="177.5" cy="44" rx=".95" ry="1.25" fill="#333"/><ellipse cx="182.3" cy="44" rx=".95" ry="1.25" fill="#333"/><path d="M175.5 47.4c1.6 3.6 7.2 3.6 8.8 0" fill="none" stroke="#333" stroke-width="1.05"/><path d="M188 74.4l3.4-3.6 3.4 3.6" fill="none" stroke="#333" stroke-width="1.4"/><path d="M188.2 440.2l3.4 3.6 3.4-3.6" fill="none" stroke="#333" stroke-width="1.4"/></svg><div class="tile" style="left:15.6px;top:342.1px;width:84.6px;height:86.2px"><svg width="84.6" height="86.2" viewBox="0 0 84.6 86.2"><path d="M0.2 19.2h8.8" stroke="#222" stroke-width=".65"/><path d="M10.5 19.2l-3.2-1.25v2.5z" fill="#222"/><path d="M48.5 19.2h12.0" stroke="#222" stroke-width=".65"/><path d="M62.0 19.2l-3.2-1.25v2.5z" fill="#222"/><path d="M47.0 19.2l3.2-1.25v2.5z" fill="#222"/><path d="M30.4 17.0L30.4 11.1" stroke="#1E1E1E" stroke-width=".75"/><path d="M31.7 17.0L31.7 11.1" stroke="#1E1E1E" stroke-width=".55"/><text x="30.4" y="10.7" font-size="5.9" text-anchor="middle" fill="#1E1E1E" stroke="#1E1E1E" stroke-width=".18">O</text><path d="M29.4 18.8L24.4 21.8" stroke="#1E1E1E" stroke-width=".75"/><text x="22.2" y="25.3" font-size="5.9" text-anchor="middle" fill="#1E1E1E" stroke="#1E1E1E" stroke-width=".18">O</text><path d="M17.0 21.7h2.2" stroke="#1E1E1E" stroke-width=".55"/><path d="M31.6 18.5L37.3 20.1" stroke="#1E1E1E" stroke-width=".75"/><path d="M31.2 19.8L36.9 21.4" stroke="#1E1E1E" stroke-width=".55"/><text x="39.8" y="23.0" font-size="5.9" text-anchor="middle" fill="#1E1E1E" stroke="#1E1E1E" stroke-width=".18">O</text><path d="M30.8 19.3L32.6 25.1" stroke="#1E1E1E" stroke-width=".75"/><text x="33.4" y="29.8" font-size="5.9" text-anchor="middle" fill="#1E1E1E" stroke="#1E1E1E" stroke-width=".18">O</text><path d="M36.2 25.6h2.2" stroke="#1E1E1E" stroke-width=".55"/><text x="30.4" y="19.7" font-size="4.2" text-anchor="middle" fill="#1E1E1E">S</text><path d="M77.6 16.7L77.6 10.7" stroke="#1E1E1E" stroke-width=".75"/><text x="77.6" y="10.3" font-size="5.9" text-anchor="middle" fill="#1E1E1E" stroke="#1E1E1E" stroke-width=".18">O</text><path d="M80.4 6.1h2.2" stroke="#1E1E1E" stroke-width=".55"/><path d="M76.6 18.6L72.0 21.7" stroke="#1E1E1E" stroke-width=".75"/><path d="M75.9 17.5L71.2 20.6" stroke="#1E1E1E" stroke-width=".55"/><text x="69.8" y="25.3" font-size="5.9" text-anchor="middle" fill="#1E1E1E" stroke="#1E1E1E" stroke-width=".18">O</text><path d="M78.7 18.3L83.5 19.8" stroke="#1E1E1E" stroke-width=".75"/><text x="86.0" y="22.8" font-size="5.9" text-anchor="middle" fill="#1E1E1E" stroke="#1E1E1E" stroke-width=".18">O</text><path d="M77.9 19.1L79.5 25.1" stroke="#1E1E1E" stroke-width=".75"/><text x="80.1" y="29.8" font-size="5.9" text-anchor="middle" fill="#1E1E1E" stroke="#1E1E1E" stroke-width=".18">O</text><path d="M82.9 25.6h2.2" stroke="#1E1E1E" stroke-width=".55"/><text x="77.6" y="19.4" font-size="4.2" text-anchor="middle" fill="#1E1E1E">S</text><path d="M0.2 67.4h8.8" stroke="#222" stroke-width=".65"/><path d="M10.5 67.4l-3.2-1.25v2.5z" fill="#222"/><path d="M48.5 67.4h12.0" stroke="#222" stroke-width=".65"/><path d="M62.0 67.4l-3.2-1.25v2.5z" fill="#222"/><path d="M47.0 67.4l3.2-1.25v2.5z" fill="#222"/><path d="M29.0 65.8L29.3 59.4" stroke="#1E1E1E" stroke-width=".75"/><text x="29.4" y="59.0" font-size="5.9" text-anchor="middle" fill="#1E1E1E" stroke="#1E1E1E" stroke-width=".18">O</text><path d="M32.2 54.8h2.2" stroke="#1E1E1E" stroke-width=".55"/><path d="M27.9 67.6L23.6 70.0" stroke="#1E1E1E" stroke-width=".75"/><text x="21.3" y="73.5" font-size="5.9" text-anchor="middle" fill="#1E1E1E" stroke="#1E1E1E" stroke-width=".18">O</text><path d="M16.1 69.9h2.2" stroke="#1E1E1E" stroke-width=".55"/><path d="M30.1 67.2L35.2 68.1" stroke="#1E1E1E" stroke-width=".75"/><path d="M29.9 68.5L35.0 69.3" stroke="#1E1E1E" stroke-width=".55"/><text x="37.8" y="70.7" font-size="5.9" text-anchor="middle" fill="#1E1E1E" stroke="#1E1E1E" stroke-width=".18">O</text><path d="M29.1 68.2L30.3 73.8" stroke="#1E1E1E" stroke-width=".75"/><path d="M27.9 68.4L29.0 74.0" stroke="#1E1E1E" stroke-width=".55"/><text x="30.8" y="78.5" font-size="5.9" text-anchor="middle" fill="#1E1E1E" stroke="#1E1E1E" stroke-width=".18">O</text><text x="28.9" y="68.5" font-size="4.2" text-anchor="middle" fill="#1E1E1E">S</text><path d="M77.2 65.4L77.5 59.4" stroke="#1E1E1E" stroke-width=".75"/><text x="77.6" y="59.0" font-size="5.9" text-anchor="middle" fill="#1E1E1E" stroke="#1E1E1E" stroke-width=".18">O</text><path d="M80.4 54.8h2.2" stroke="#1E1E1E" stroke-width=".55"/><path d="M76.2 67.3L71.9 70.3" stroke="#1E1E1E" stroke-width=".75"/><path d="M75.5 66.2L71.2 69.2" stroke="#1E1E1E" stroke-width=".55"/><text x="69.8" y="74.0" font-size="5.9" text-anchor="middle" fill="#1E1E1E" stroke="#1E1E1E" stroke-width=".18">O</text><path d="M78.4 66.9L83.5 68.3" stroke="#1E1E1E" stroke-width=".75"/><text x="86.0" y="71.2" font-size="5.9" text-anchor="middle" fill="#1E1E1E" stroke="#1E1E1E" stroke-width=".18">O</text><path d="M77.5 67.7L79.4 73.8" stroke="#1E1E1E" stroke-width=".75"/><path d="M76.3 68.1L78.1 74.2" stroke="#1E1E1E" stroke-width=".55"/><text x="80.1" y="78.5" font-size="5.9" text-anchor="middle" fill="#1E1E1E" stroke="#1E1E1E" stroke-width=".18">O</text><text x="77.2" y="68.1" font-size="4.2" text-anchor="middle" fill="#1E1E1E">S</text><path d="M77.6 36v11.6" stroke="#222" stroke-width=".65"/><path d="M77.6 33.6l-1.25 3.2h2.5zM77.6 50l-1.25-3.2h2.5z" fill="#222"/></svg></div><div class="tile" style="left:106.2px;top:342.1px;width:80.0px;height:86.2px"><svg width="80.0" height="86.2" viewBox="0 0 80.0 86.2"><text x="2.2" y="4.0" font-size="2.8" font-weight="700" fill="#333" stroke="#333" stroke-width=".12">Formula</text><text x="27.4" y="4.0" font-size="2.8" font-weight="700" fill="#333" stroke="#333" stroke-width=".12">Structure</text><text x="56.6" y="3.6" font-size="2.6" font-weight="700" fill="#333" stroke="#333" stroke-width=".12">Resonance</text><text x="56.8" y="6.6" font-size="2.6" font-weight="700" fill="#333" stroke="#333" stroke-width=".12">structures</text><text x="3.0" y="14.4" font-size="3.4" font-weight="400" fill="#333" stroke="#333" stroke-width=".12">NO₂⁻</text><text x="4.4" y="27.4" font-size="3.4" font-weight="400" fill="#333" stroke="#333" stroke-width=".12">O₃</text><text x="3.4" y="47.4" font-size="3.4" font-weight="400" fill="#333" stroke="#333" stroke-width=".12">SO₃</text><text x="4.4" y="69.0" font-size="3.4" font-weight="400" fill="#333" stroke="#333" stroke-width=".12">H₂O</text><path d="M24.6 9.4h-1.4v9.4h1.4M40.0 9.4h1.4v9.4h-1.4" fill="none" stroke="#333" stroke-width=".5"/><text x="26.0" y="15.6" font-size="3.0" font-weight="400" fill="#333" stroke="#333" stroke-width=".12">:Ö–N=Ö:</text><path d="M57.6 9.4h-1.4v9.4h1.4M70.0 9.4h1.4v9.4h-1.4" fill="none" stroke="#333" stroke-width=".5"/><text x="58.6" y="15.6" font-size="3.0" font-weight="400" fill="#333" stroke="#333" stroke-width=".12">Ö=N–Ö</text><text x="25.4" y="28.2" font-size="3.1" font-weight="400" fill="#333" stroke="#333" stroke-width=".12">:Ö–Ö=Ö:</text><text x="58.6" y="28.2" font-size="3.1" font-weight="400" fill="#333" stroke="#333" stroke-width=".12">Ö=Ö–Ö</text><path d="M25.6 39.0h-1.4v15.4h1.4M39.2 39.0h1.4v15.4h-1.4" fill="none" stroke="#333" stroke-width=".5"/><text x="27.4" y="44.8" font-size="2.8" font-weight="400" fill="#333" stroke="#333" stroke-width=".12">:O: :O:</text><text x="31.0" y="49.0" font-size="3.0" font-weight="400" fill="#333" stroke="#333" stroke-width=".12">S</text><text x="30.4" y="53.0" font-size="2.8" font-weight="400" fill="#333" stroke="#333" stroke-width=".12">:O:</text><path d="M52.8 39.0h-1.4v15.4h1.4M65.4 39.0h1.4v15.4h-1.4" fill="none" stroke="#333" stroke-width=".5"/><text x="54.0" y="44.8" font-size="2.6" font-weight="400" fill="#333" stroke="#333" stroke-width=".12">:O: :O:</text><text x="57.6" y="49.0" font-size="3.0" font-weight="400" fill="#333" stroke="#333" stroke-width=".12">S</text><text x="57.0" y="53.0" font-size="2.6" font-weight="400" fill="#333" stroke="#333" stroke-width=".12">:O:</text><path d="M70.2 39.0h-1.4v15.4h1.4M82.8 39.0h1.4v15.4h-1.4" fill="none" stroke="#333" stroke-width=".5"/><text x="71.4" y="44.8" font-size="2.6" font-weight="400" fill="#333" stroke="#333" stroke-width=".12">:O: :O</text><text x="75.0" y="49.0" font-size="3.0" font-weight="400" fill="#333" stroke="#333" stroke-width=".12">S</text><text x="74.4" y="53.0" font-size="2.6" font-weight="400" fill="#333" stroke="#333" stroke-width=".12">:O:</text><text x="24.4" y="65.6" font-size="3.0" font-weight="400" fill="#333" stroke="#333" stroke-width=".12">H–Ö–H</text><text x="20.0" y="74.6" font-size="3.0" font-weight="400" fill="#333" stroke="#333" stroke-width=".12">[H–Ö:]</text><text x="36.6" y="74.6" font-size="3.0" font-weight="400" fill="#333" stroke="#333" stroke-width=".12">H–Ö–H</text><text x="59.0" y="74.6" font-size="3.0" font-weight="400" fill="#333" stroke="#333" stroke-width=".12">H:Ö:H</text></svg></div><div class="tile" style="left:15.6px;top:434.6px;width:84.6px;height:22.2px"><svg width="84.6" height="22.2" viewBox="0 0 84.6 22.2"><rect x="1.6" y="6.8" width="2.6" height="13" rx="1.2" fill="none" stroke="#222" stroke-width=".7"/><path d="M18.5 14.6h8.6" stroke="#222" stroke-width=".65"/><path d="M28.6 14.6l-3.2-1.25v2.5z" fill="#222"/><path d="M17.0 14.6l3.2-1.25v2.5z" fill="#222"/><text x="49.6" y="7.4" font-size="5" text-anchor="middle" fill="#222">:O:</text><text x="57.6" y="6.4" font-size="4.4" fill="#222">1-</text><path d="M49.6 8.6v9.4M49.6 18l-4.6 4M49.6 18l4.6 4" stroke="#222" stroke-width=".7" fill="none"/><path d="M73.5 13.6h9.0" stroke="#222" stroke-width=".65"/><path d="M84.0 13.6l-3.2-1.25v2.5z" fill="#222"/><path d="M72.0 13.6l3.2-1.25v2.5z" fill="#222"/></svg></div><div class="tile" style="left:106.2px;top:434.6px;width:80.0px;height:22.2px"><svg width="80.0" height="22.2" viewBox="0 0 80.0 22.2"><text x="15.0" y="3.0" font-size="2.6" font-weight="700" fill="#333">valence</text><text x="14.4" y="5.8" font-size="2.6" font-weight="700" fill="#333">electrons</text><text x="35.0" y="3.4" font-size="2.4" font-weight="400" fill="#333">Lewis dot</text><text x="35.0" y="6.0" font-size="2.4" font-weight="400" fill="#333">structure</text><text x="66.0" y="2.8" font-size="2.2" font-weight="400" fill="#333">VSEPR</text><text x="66.0" y="5.2" font-size="2.2" font-weight="400" fill="#333">geometry</text><text x="2.0" y="11.6" font-size="3.0" font-weight="400" fill="#333">HCl</text><text x="2.0" y="18.6" font-size="3.0" font-weight="400" fill="#333">NO₃</text><text x="19.0" y="11.6" font-size="3.0" font-weight="400" fill="#333">8</text><text x="18.0" y="18.6" font-size="3.0" font-weight="400" fill="#333">24</text><text x="42.0" y="12.0" font-size="3.0" font-weight="400" fill="#333">H–Cl:</text><text x="39.0" y="19.0" font-size="3.0" font-weight="400" fill="#333">:Ö–N=Ö</text><text x="70.0" y="12.4" font-size="2.8" font-weight="400" fill="#333">linear</text><text x="68.0" y="19.0" font-size="2.8" font-weight="400" fill="#333">trigonal</text></svg></div></div>
<svg class="r" style="left:0.00px;top:0.00px;" width="716" height="513" viewBox="0 0 716 513"><path d="M572.2 47.8L636.9 108.2V451.4L572.2 511.3z" fill="rgba(173,173,173,.78)"/></svg>
<div class="pn bg" style="left:371px;top:50px;box-shadow:0 0 2.5px rgba(0,0,0,.16);"><div class="c1"></div><div class="c2"></div><div class="sb"></div><div class="th"></div><div class="t" style="left:4.00px;top:8.14px;font-size:13.90px;transform:scaleX(0.939);transform-origin:0 0;color:#D4532F;">Insights</div><div class="t" style="left:13.20px;top:42.79px;font-size:7.60px;transform:scaleX(0.993);transform-origin:0 0;color:#B5402A;">Explore</div><div class="t" style="left:51.60px;top:42.79px;font-size:7.60px;transform:scaleX(1.020);transform-origin:0 0;color:#555;">Define</div><div class="t" style="left:13.70px;top:61.58px;font-size:10.90px;transform:scaleX(0.928);transform-origin:0 0;color:#444;">Lewis structure</div><div class="t" style="left:13.5px;top:83.03px;font-size:9.60px;transform:scaleX(0.933);transform-origin:0 0;">Lewis structures are diagrams that show</div><div class="t" style="left:13.5px;top:96.33px;font-size:9.60px;transform:scaleX(0.956);transform-origin:0 0;">the bonding between atoms of a</div><div class="t" style="left:13.5px;top:109.63px;font-size:9.60px;transform:scaleX(0.948);transform-origin:0 0;">molecule and the lone pairs of electrons</div><div class="t" style="left:13.5px;top:122.93px;font-size:9.60px;transform:scaleX(0.941);transform-origin:0 0;">that may exist in the molecule. A Lewis</div><div class="t" style="left:13.5px;top:136.23px;font-size:9.60px;transform:scaleX(0.945);transform-origin:0 0;">structure can be drawn for any</div><div class="t" style="left:13.5px;top:149.53px;font-size:9.60px;transform:scaleX(0.936);transform-origin:0 0;">covalently bonded molecule, as well as</div><div class="t" style="left:13.5px;top:162.83px;font-size:9.60px;transform:scaleX(0.941);transform-origin:0 0;">coordination compounds. The Lewis</div><div class="t" style="left:13.5px;top:176.13px;font-size:9.60px;transform:scaleX(0.936);transform-origin:0 0;">structure was named after Gilbert N.</div><div class="t" style="left:13.5px;top:189.43px;font-size:9.60px;transform:scaleX(0.942);transform-origin:0 0;">Lewis, who introduced it in his 1916</div><div class="t" style="left:13.5px;top:202.73px;font-size:9.60px;transform:scaleX(0.944);transform-origin:0 0;">article The Atom and the Molecule. They</div><div class="t" style="left:13.5px;top:216.03px;font-size:9.60px;transform:scaleX(0.953);transform-origin:0 0;">are similar to electron dot diagrams in</div><div class="t" style="left:13.5px;top:229.33px;font-size:9.60px;transform:scaleX(0.940);transform-origin:0 0;">that the valence electrons in lone pairs</div><div class="t" style="left:13.5px;top:242.63px;font-size:9.60px;transform:scaleX(0.933);transform-origin:0 0;">are represented as dots, but they also</div><div class="t" style="left:13.5px;top:255.93px;font-size:9.60px;transform:scaleX(0.937);transform-origin:0 0;">contain lines to represent shared pairs</div><div class="t" style="left:13.5px;top:269.23px;font-size:9.60px;transform:scaleX(0.935);transform-origin:0 0;">in a chemical bond.</div><div class="t" style="left:13.50px;top:287.53px;font-size:7.70px;transform:scaleX(0.986);transform-origin:0 0;color:#555;">en.wikipedia.org - Text under CC-BY-SA license</div><div class="t" style="left:97.30px;top:306.85px;font-size:9.40px;transform:scaleX(0.978);transform-origin:0 0;color:#A8392A;">More quick insights</div><svg class="r" style="left:0;top:0" width="201" height="461" viewBox="0 0 201 461"><path d="M180.6 10.6h5l-2.5 2.8z" fill="#555"/><path d="M191.4 8.6l5.4 5.4M196.8 8.6l-5.4 5.4" stroke="#444" stroke-width="1.6"/><circle cx="179.9" cy="45.8" r="6.3" fill="#fff" stroke="#333" stroke-width="1.3"/><ellipse cx="177.5" cy="44" rx=".95" ry="1.25" fill="#333"/><ellipse cx="182.3" cy="44" rx=".95" ry="1.25" fill="#333"/><path d="M175.5 47.4c1.6 3.6 7.2 3.6 8.8 0" fill="none" stroke="#333" stroke-width="1.05"/><path d="M188 74.4l3.4-3.6 3.4 3.6" fill="none" stroke="#333" stroke-width="1.4"/><path d="M188.2 440.2l3.4 3.6 3.4-3.6" fill="none" stroke="#333" stroke-width="1.4"/></svg><div class="tile" style="left:15.6px;top:342.1px;width:84.6px;height:86.2px"><svg width="84.6" height="86.2" viewBox="0 0 84.6 86.2"><path d="M0.2 19.2h8.8" stroke="#222" stroke-width=".65"/><path d="M10.5 19.2l-3.2-1.25v2.5z" fill="#222"/><path d="M48.5 19.2h12.0" stroke="#222" stroke-width=".65"/><path d="M62.0 19.2l-3.2-1.25v2.5z" fill="#222"/><path d="M47.0 19.2l3.2-1.25v2.5z" fill="#222"/><path d="M30.4 17.0L30.4 11.1" stroke="#1E1E1E" stroke-width=".75"/><path d="M31.7 17.0L31.7 11.1" stroke="#1E1E1E" stroke-width=".55"/><text x="30.4" y="10.7" font-size="5.9" text-anchor="middle" fill="#1E1E1E" stroke="#1E1E1E" stroke-width=".18">O</text><path d="M29.4 18.8L24.4 21.8" stroke="#1E1E1E" stroke-width=".75"/><text x="22.2" y="25.3" font-size="5.9" text-anchor="middle" fill="#1E1E1E" stroke="#1E1E1E" stroke-width=".18">O</text><path d="M17.0 21.7h2.2" stroke="#1E1E1E" stroke-width=".55"/><path d="M31.6 18.5L37.3 20.1" stroke="#1E1E1E" stroke-width=".75"/><path d="M31.2 19.8L36.9 21.4" stroke="#1E1E1E" stroke-width=".55"/><text x="39.8" y="23.0" font-size="5.9" text-anchor="middle" fill="#1E1E1E" stroke="#1E1E1E" stroke-width=".18">O</text><path d="M30.8 19.3L32.6 25.1" stroke="#1E1E1E" stroke-width=".75"/><text x="33.4" y="29.8" font-size="5.9" text-anchor="middle" fill="#1E1E1E" stroke="#1E1E1E" stroke-width=".18">O</text><path d="M36.2 25.6h2.2" stroke="#1E1E1E" stroke-width=".55"/><text x="30.4" y="19.7" font-size="4.2" text-anchor="middle" fill="#1E1E1E">S</text><path d="M77.6 16.7L77.6 10.7" stroke="#1E1E1E" stroke-width=".75"/><text x="77.6" y="10.3" font-size="5.9" text-anchor="middle" fill="#1E1E1E" stroke="#1E1E1E" stroke-width=".18">O</text><path d="M80.4 6.1h2.2" stroke="#1E1E1E" stroke-width=".55"/><path d="M76.6 18.6L72.0 21.7" stroke="#1E1E1E" stroke-width=".75"/><path d="M75.9 17.5L71.2 20.6" stroke="#1E1E1E" stroke-width=".55"/><text x="69.8" y="25.3" font-size="5.9" text-anchor="middle" fill="#1E1E1E" stroke="#1E1E1E" stroke-width=".18">O</text><path d="M78.7 18.3L83.5 19.8" stroke="#1E1E1E" stroke-width=".75"/><text x="86.0" y="22.8" font-size="5.9" text-anchor="middle" fill="#1E1E1E" stroke="#1E1E1E" stroke-width=".18">O</text><path d="M77.9 19.1L79.5 25.1" stroke="#1E1E1E" stroke-width=".75"/><text x="80.1" y="29.8" font-size="5.9" text-anchor="middle" fill="#1E1E1E" stroke="#1E1E1E" stroke-width=".18">O</text><path d="M82.9 25.6h2.2" stroke="#1E1E1E" stroke-width=".55"/><text x="77.6" y="19.4" font-size="4.2" text-anchor="middle" fill="#1E1E1E">S</text><path d="M0.2 67.4h8.8" stroke="#222" stroke-width=".65"/><path d="M10.5 67.4l-3.2-1.25v2.5z" fill="#222"/><path d="M48.5 67.4h12.0" stroke="#222" stroke-width=".65"/><path d="M62.0 67.4l-3.2-1.25v2.5z" fill="#222"/><path d="M47.0 67.4l3.2-1.25v2.5z" fill="#222"/><path d="M29.0 65.8L29.3 59.4" stroke="#1E1E1E" stroke-width=".75"/><text x="29.4" y="59.0" font-size="5.9" text-anchor="middle" fill="#1E1E1E" stroke="#1E1E1E" stroke-width=".18">O</text><path d="M32.2 54.8h2.2" stroke="#1E1E1E" stroke-width=".55"/><path d="M27.9 67.6L23.6 70.0" stroke="#1E1E1E" stroke-width=".75"/><text x="21.3" y="73.5" font-size="5.9" text-anchor="middle" fill="#1E1E1E" stroke="#1E1E1E" stroke-width=".18">O</text><path d="M16.1 69.9h2.2" stroke="#1E1E1E" stroke-width=".55"/><path d="M30.1 67.2L35.2 68.1" stroke="#1E1E1E" stroke-width=".75"/><path d="M29.9 68.5L35.0 69.3" stroke="#1E1E1E" stroke-width=".55"/><text x="37.8" y="70.7" font-size="5.9" text-anchor="middle" fill="#1E1E1E" stroke="#1E1E1E" stroke-width=".18">O</text><path d="M29.1 68.2L30.3 73.8" stroke="#1E1E1E" stroke-width=".75"/><path d="M27.9 68.4L29.0 74.0" stroke="#1E1E1E" stroke-width=".55"/><text x="30.8" y="78.5" font-size="5.9" text-anchor="middle" fill="#1E1E1E" stroke="#1E1E1E" stroke-width=".18">O</text><text x="28.9" y="68.5" font-size="4.2" text-anchor="middle" fill="#1E1E1E">S</text><path d="M77.2 65.4L77.5 59.4" stroke="#1E1E1E" stroke-width=".75"/><text x="77.6" y="59.0" font-size="5.9" text-anchor="middle" fill="#1E1E1E" stroke="#1E1E1E" stroke-width=".18">O</text><path d="M80.4 54.8h2.2" stroke="#1E1E1E" stroke-width=".55"/><path d="M76.2 67.3L71.9 70.3" stroke="#1E1E1E" stroke-width=".75"/><path d="M75.5 66.2L71.2 69.2" stroke="#1E1E1E" stroke-width=".55"/><text x="69.8" y="74.0" font-size="5.9" text-anchor="middle" fill="#1E1E1E" stroke="#1E1E1E" stroke-width=".18">O</text><path d="M78.4 66.9L83.5 68.3" stroke="#1E1E1E" stroke-width=".75"/><text x="86.0" y="71.2" font-size="5.9" text-anchor="middle" fill="#1E1E1E" stroke="#1E1E1E" stroke-width=".18">O</text><path d="M77.5 67.7L79.4 73.8" stroke="#1E1E1E" stroke-width=".75"/><path d="M76.3 68.1L78.1 74.2" stroke="#1E1E1E" stroke-width=".55"/><text x="80.1" y="78.5" font-size="5.9" text-anchor="middle" fill="#1E1E1E" stroke="#1E1E1E" stroke-width=".18">O</text><text x="77.2" y="68.1" font-size="4.2" text-anchor="middle" fill="#1E1E1E">S</text><path d="M77.6 36v11.6" stroke="#222" stroke-width=".65"/><path d="M77.6 33.6l-1.25 3.2h2.5zM77.6 50l-1.25-3.2h2.5z" fill="#222"/></svg></div><div class="tile" style="left:106.2px;top:342.1px;width:80.0px;height:86.2px"><svg width="80.0" height="86.2" viewBox="0 0 80.0 86.2"><text x="2.2" y="4.0" font-size="2.8" font-weight="700" fill="#333" stroke="#333" stroke-width=".12">Formula</text><text x="27.4" y="4.0" font-size="2.8" font-weight="700" fill="#333" stroke="#333" stroke-width=".12">Structure</text><text x="56.6" y="3.6" font-size="2.6" font-weight="700" fill="#333" stroke="#333" stroke-width=".12">Resonance</text><text x="56.8" y="6.6" font-size="2.6" font-weight="700" fill="#333" stroke="#333" stroke-width=".12">structures</text><text x="3.0" y="14.4" font-size="3.4" font-weight="400" fill="#333" stroke="#333" stroke-width=".12">NO₂⁻</text><text x="4.4" y="27.4" font-size="3.4" font-weight="400" fill="#333" stroke="#333" stroke-width=".12">O₃</text><text x="3.4" y="47.4" font-size="3.4" font-weight="400" fill="#333" stroke="#333" stroke-width=".12">SO₃</text><text x="4.4" y="69.0" font-size="3.4" font-weight="400" fill="#333" stroke="#333" stroke-width=".12">H₂O</text><path d="M24.6 9.4h-1.4v9.4h1.4M40.0 9.4h1.4v9.4h-1.4" fill="none" stroke="#333" stroke-width=".5"/><text x="26.0" y="15.6" font-size="3.0" font-weight="400" fill="#333" stroke="#333" stroke-width=".12">:Ö–N=Ö:</text><path d="M57.6 9.4h-1.4v9.4h1.4M70.0 9.4h1.4v9.4h-1.4" fill="none" stroke="#333" stroke-width=".5"/><text x="58.6" y="15.6" font-size="3.0" font-weight="400" fill="#333" stroke="#333" stroke-width=".12">Ö=N–Ö</text><text x="25.4" y="28.2" font-size="3.1" font-weight="400" fill="#333" stroke="#333" stroke-width=".12">:Ö–Ö=Ö:</text><text x="58.6" y="28.2" font-size="3.1" font-weight="400" fill="#333" stroke="#333" stroke-width=".12">Ö=Ö–Ö</text><path d="M25.6 39.0h-1.4v15.4h1.4M39.2 39.0h1.4v15.4h-1.4" fill="none" stroke="#333" stroke-width=".5"/><text x="27.4" y="44.8" font-size="2.8" font-weight="400" fill="#333" stroke="#333" stroke-width=".12">:O: :O:</text><text x="31.0" y="49.0" font-size="3.0" font-weight="400" fill="#333" stroke="#333" stroke-width=".12">S</text><text x="30.4" y="53.0" font-size="2.8" font-weight="400" fill="#333" stroke="#333" stroke-width=".12">:O:</text><path d="M52.8 39.0h-1.4v15.4h1.4M65.4 39.0h1.4v15.4h-1.4" fill="none" stroke="#333" stroke-width=".5"/><text x="54.0" y="44.8" font-size="2.6" font-weight="400" fill="#333" stroke="#333" stroke-width=".12">:O: :O:</text><text x="57.6" y="49.0" font-size="3.0" font-weight="400" fill="#333" stroke="#333" stroke-width=".12">S</text><text x="57.0" y="53.0" font-size="2.6" font-weight="400" fill="#333" stroke="#333" stroke-width=".12">:O:</text><path d="M70.2 39.0h-1.4v15.4h1.4M82.8 39.0h1.4v15.4h-1.4" fill="none" stroke="#333" stroke-width=".5"/><text x="71.4" y="44.8" font-size="2.6" font-weight="400" fill="#333" stroke="#333" stroke-width=".12">:O: :O</text><text x="75.0" y="49.0" font-size="3.0" font-weight="400" fill="#333" stroke="#333" stroke-width=".12">S</text><text x="74.4" y="53.0" font-size="2.6" font-weight="400" fill="#333" stroke="#333" stroke-width=".12">:O:</text><text x="24.4" y="65.6" font-size="3.0" font-weight="400" fill="#333" stroke="#333" stroke-width=".12">H–Ö–H</text><text x="20.0" y="74.6" font-size="3.0" font-weight="400" fill="#333" stroke="#333" stroke-width=".12">[H–Ö:]</text><text x="36.6" y="74.6" font-size="3.0" font-weight="400" fill="#333" stroke="#333" stroke-width=".12">H–Ö–H</text><text x="59.0" y="74.6" font-size="3.0" font-weight="400" fill="#333" stroke="#333" stroke-width=".12">H:Ö:H</text></svg></div><div class="tile" style="left:15.6px;top:434.6px;width:84.6px;height:22.2px"><svg width="84.6" height="22.2" viewBox="0 0 84.6 22.2"><rect x="1.6" y="6.8" width="2.6" height="13" rx="1.2" fill="none" stroke="#222" stroke-width=".7"/><path d="M18.5 14.6h8.6" stroke="#222" stroke-width=".65"/><path d="M28.6 14.6l-3.2-1.25v2.5z" fill="#222"/><path d="M17.0 14.6l3.2-1.25v2.5z" fill="#222"/><text x="49.6" y="7.4" font-size="5" text-anchor="middle" fill="#222">:O:</text><text x="57.6" y="6.4" font-size="4.4" fill="#222">1-</text><path d="M49.6 8.6v9.4M49.6 18l-4.6 4M49.6 18l4.6 4" stroke="#222" stroke-width=".7" fill="none"/><path d="M73.5 13.6h9.0" stroke="#222" stroke-width=".65"/><path d="M84.0 13.6l-3.2-1.25v2.5z" fill="#222"/><path d="M72.0 13.6l3.2-1.25v2.5z" fill="#222"/></svg></div><div class="tile" style="left:106.2px;top:434.6px;width:80.0px;height:22.2px"><svg width="80.0" height="22.2" viewBox="0 0 80.0 22.2"><text x="15.0" y="3.0" font-size="2.6" font-weight="700" fill="#333">valence</text><text x="14.4" y="5.8" font-size="2.6" font-weight="700" fill="#333">electrons</text><text x="35.0" y="3.4" font-size="2.4" font-weight="400" fill="#333">Lewis dot</text><text x="35.0" y="6.0" font-size="2.4" font-weight="400" fill="#333">structure</text><text x="66.0" y="2.8" font-size="2.2" font-weight="400" fill="#333">VSEPR</text><text x="66.0" y="5.2" font-size="2.2" font-weight="400" fill="#333">geometry</text><text x="2.0" y="11.6" font-size="3.0" font-weight="400" fill="#333">HCl</text><text x="2.0" y="18.6" font-size="3.0" font-weight="400" fill="#333">NO₃</text><text x="19.0" y="11.6" font-size="3.0" font-weight="400" fill="#333">8</text><text x="18.0" y="18.6" font-size="3.0" font-weight="400" fill="#333">24</text><text x="42.0" y="12.0" font-size="3.0" font-weight="400" fill="#333">H–Cl:</text><text x="39.0" y="19.0" font-size="3.0" font-weight="400" fill="#333">:Ö–N=Ö</text><text x="70.0" y="12.4" font-size="2.8" font-weight="400" fill="#333">linear</text><text x="68.0" y="19.0" font-size="2.8" font-weight="400" fill="#333">trigonal</text></svg></div></div>
</div>
</body></html>
